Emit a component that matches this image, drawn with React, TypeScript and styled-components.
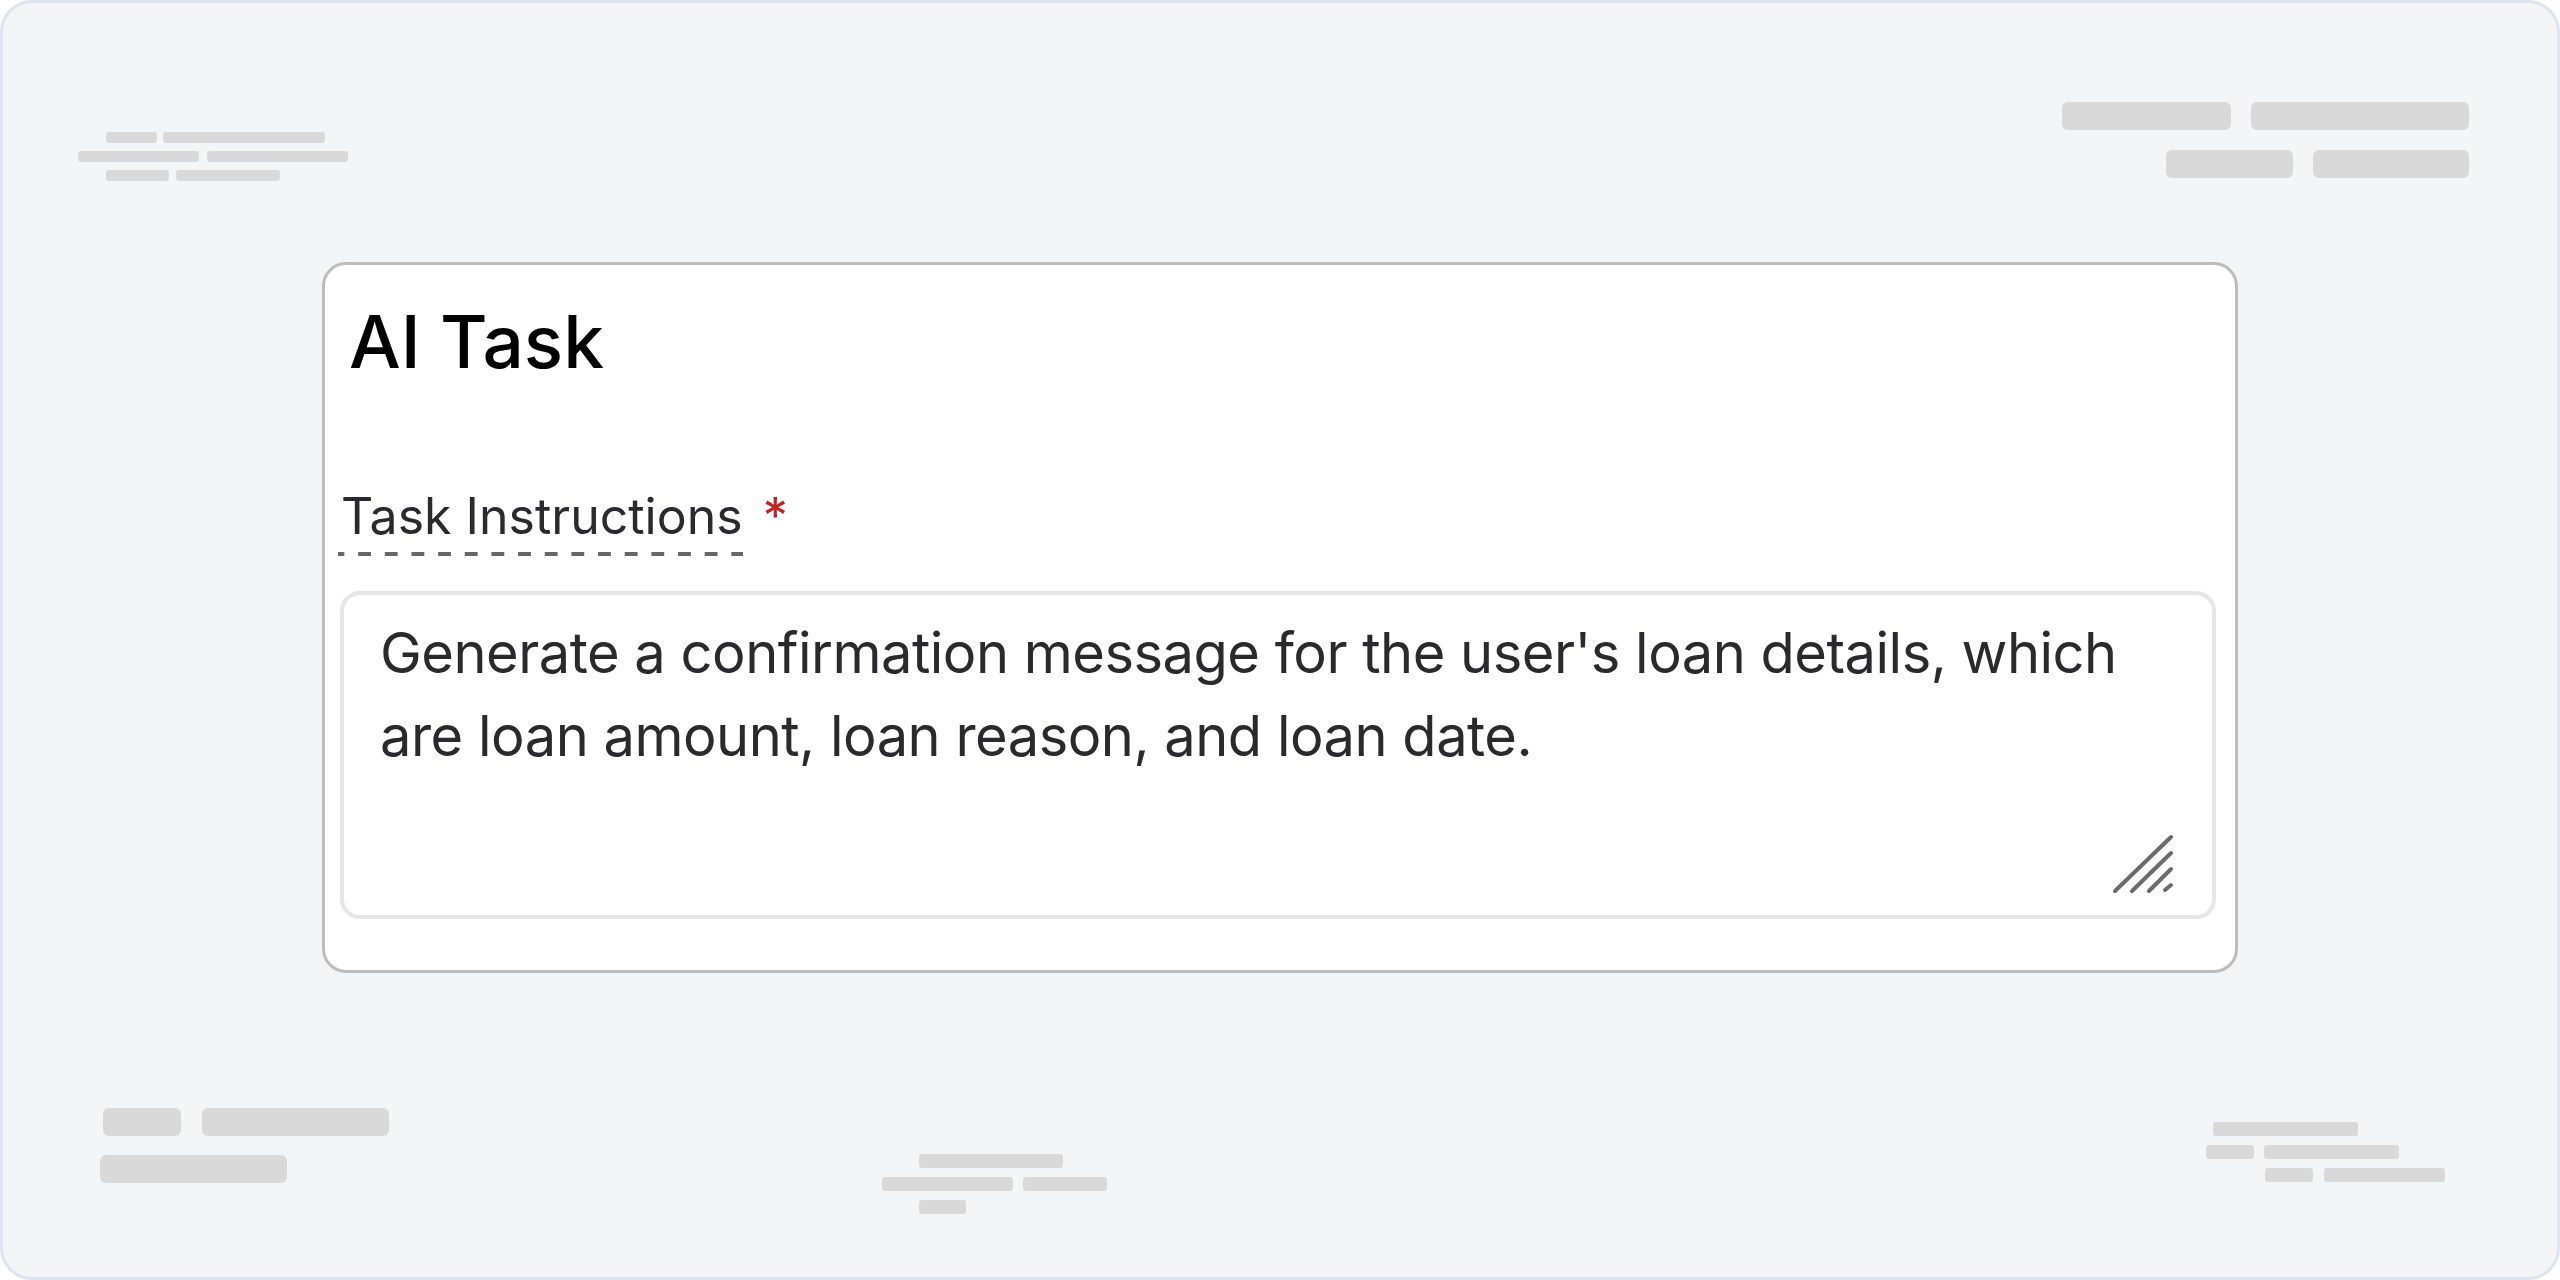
import styled, { createGlobalStyle } from 'styled-components';

const GlobalStyle = createGlobalStyle`
  * {
    box-sizing: border-box;
  }

  body {
    margin: 0;
    font-family: 'Inter', 'Noto Sans', sans-serif;
  }
`;

const Frame = styled.div`
  position: relative;
  width: 2560px;
  height: 1280px;
  border: 3px solid #dce4f0;
  border-radius: 32px;
  background: #f4f5f7;
  display: flex;
  flex-direction: column;
  align-items: center;
  padding-top: 259px;
  overflow: hidden;
`;

const SkeletonGroup = styled.div<{ $left: number; $top: number; $rowGap: number }>`
  position: absolute;
  left: ${(p) => p.$left - 3}px;
  top: ${(p) => p.$top - 3}px;
  display: flex;
  flex-direction: column;
  gap: ${(p) => p.$rowGap}px;
`;

const SkeletonRow = styled.div<{ $indent: number; $gap: number }>`
  display: flex;
  gap: ${(p) => p.$gap}px;
  padding-left: ${(p) => p.$indent}px;
`;

const Bar = styled.div<{ $w: number; $h: number }>`
  width: ${(p) => p.$w}px;
  height: ${(p) => p.$h}px;
  border-radius: ${(p) => (p.$h > 20 ? 6 : 3)}px;
  background: #d9d9d9;
`;

const Card = styled.section`
  width: 1916px;
  height: 711px;
  border: 3px solid #bdbdbd;
  border-radius: 24px;
  background: #ffffff;
  padding: 34px 0 0 24px;
  display: flex;
  flex-direction: column;
  align-items: flex-start;
`;

const Title = styled.h1`
  margin: 0;
  font-family: 'Inter', sans-serif;
  font-size: 73px;
  line-height: 86px;
  font-weight: 500;
  color: #000000;
`;

const Label = styled.div`
  margin: 101px 0 0 -11px;
  display: flex;
  align-items: flex-start;
`;

const LabelText = styled.span`
  position: relative;
  display: inline-block;
  padding: 0 0 10px 3px;
  font-size: 50px;
  line-height: 60px;
  font-weight: 400;
  color: #2a2a2e;

  &::after {
    content: '';
    position: absolute;
    left: 0;
    right: 0;
    bottom: 0;
    height: 4px;
    background-image: linear-gradient(to right, #66666c 50%, transparent 50%);
    background-size: 26.67px 4px;
    background-position: -6.5px 0;
  }
`;

const Required = styled.span`
  margin-left: 20px;
  font-size: 50px;
  line-height: 60px;
  color: #c62121;
`;

const Field = styled.div`
  position: relative;
  margin: 35px 0 0 -9px;
  width: 1876px;
  height: 328px;
`;

const TextArea = styled.textarea`
  display: block;
  width: 100%;
  height: 100%;
  resize: none;
  border: 4px solid #e6e6e6;
  border-radius: 20px;
  padding: 17px 36px;
  background: #ffffff;
  font-family: 'Inter', sans-serif;
  font-size: 56px;
  line-height: 83px;
  letter-spacing: -0.5px;
  color: #2a2a2e;
  outline: none;
  overflow: hidden;
`;

const Grip = styled.svg`
  position: absolute;
  right: 42px;
  bottom: 23px;
  width: 62px;
  height: 62px;
`;

type BarRow = { indent: number; gap: number; bars: number[] };

type Skeleton = {
  left: number;
  top: number;
  rowGap: number;
  height: number;
  rows: BarRow[];
};

const skeletons: Skeleton[] = [
  {
    left: 78,
    top: 132,
    rowGap: 8,
    height: 11,
    rows: [
      { indent: 28, gap: 6, bars: [51, 162] },
      { indent: 0, gap: 8, bars: [121, 141] },
      { indent: 28, gap: 7, bars: [63, 104] },
    ],
  },
  {
    left: 2062,
    top: 102,
    rowGap: 20,
    height: 28,
    rows: [
      { indent: 0, gap: 20, bars: [169, 218] },
      { indent: 104, gap: 20, bars: [127, 156] },
    ],
  },
  {
    left: 100,
    top: 1108,
    rowGap: 19,
    height: 28,
    rows: [
      { indent: 3, gap: 21, bars: [78, 187] },
      { indent: 0, gap: 0, bars: [187] },
    ],
  },
  {
    left: 882,
    top: 1154,
    rowGap: 9,
    height: 14,
    rows: [
      { indent: 37, gap: 0, bars: [144] },
      { indent: 0, gap: 10, bars: [131, 84] },
      { indent: 37, gap: 0, bars: [47] },
    ],
  },
  {
    left: 2206,
    top: 1122,
    rowGap: 9,
    height: 14,
    rows: [
      { indent: 7, gap: 0, bars: [145] },
      { indent: 0, gap: 10, bars: [48, 135] },
      { indent: 59, gap: 11, bars: [48, 121] },
    ],
  },
];

const instructions =
  "Generate a confirmation message for the user's loan details, which are loan amount, loan reason, and loan date.";

function App() {
  return (
    <>
      <GlobalStyle />
      <Frame>
        {skeletons.map((group, i) => (
          <SkeletonGroup key={i} $left={group.left} $top={group.top} $rowGap={group.rowGap}>
            {group.rows.map((row, j) => (
              <SkeletonRow key={j} $indent={row.indent} $gap={row.gap}>
                {row.bars.map((w, k) => (
                  <Bar key={k} $w={w} $h={group.height} />
                ))}
              </SkeletonRow>
            ))}
          </SkeletonGroup>
        ))}

        <Card>
          <Title>AI Task</Title>
          <Label>
            <LabelText>Task Instructions</LabelText>
            <Required>*</Required>
          </Label>
          <Field>
            <TextArea readOnly value={instructions} />
            <Grip viewBox="0 0 62 62">
              <g stroke="#6b6b6b" strokeWidth="4" strokeLinecap="round">
                <line x1="3" y1="57" x2="59" y2="3" />
                <line x1="20" y1="57" x2="59" y2="19" />
                <line x1="37" y1="57" x2="59" y2="35" />
                <line x1="53" y1="56" x2="59" y2="51" />
              </g>
            </Grip>
          </Field>
        </Card>
      </Frame>
    </>
  );
}

export default App;
